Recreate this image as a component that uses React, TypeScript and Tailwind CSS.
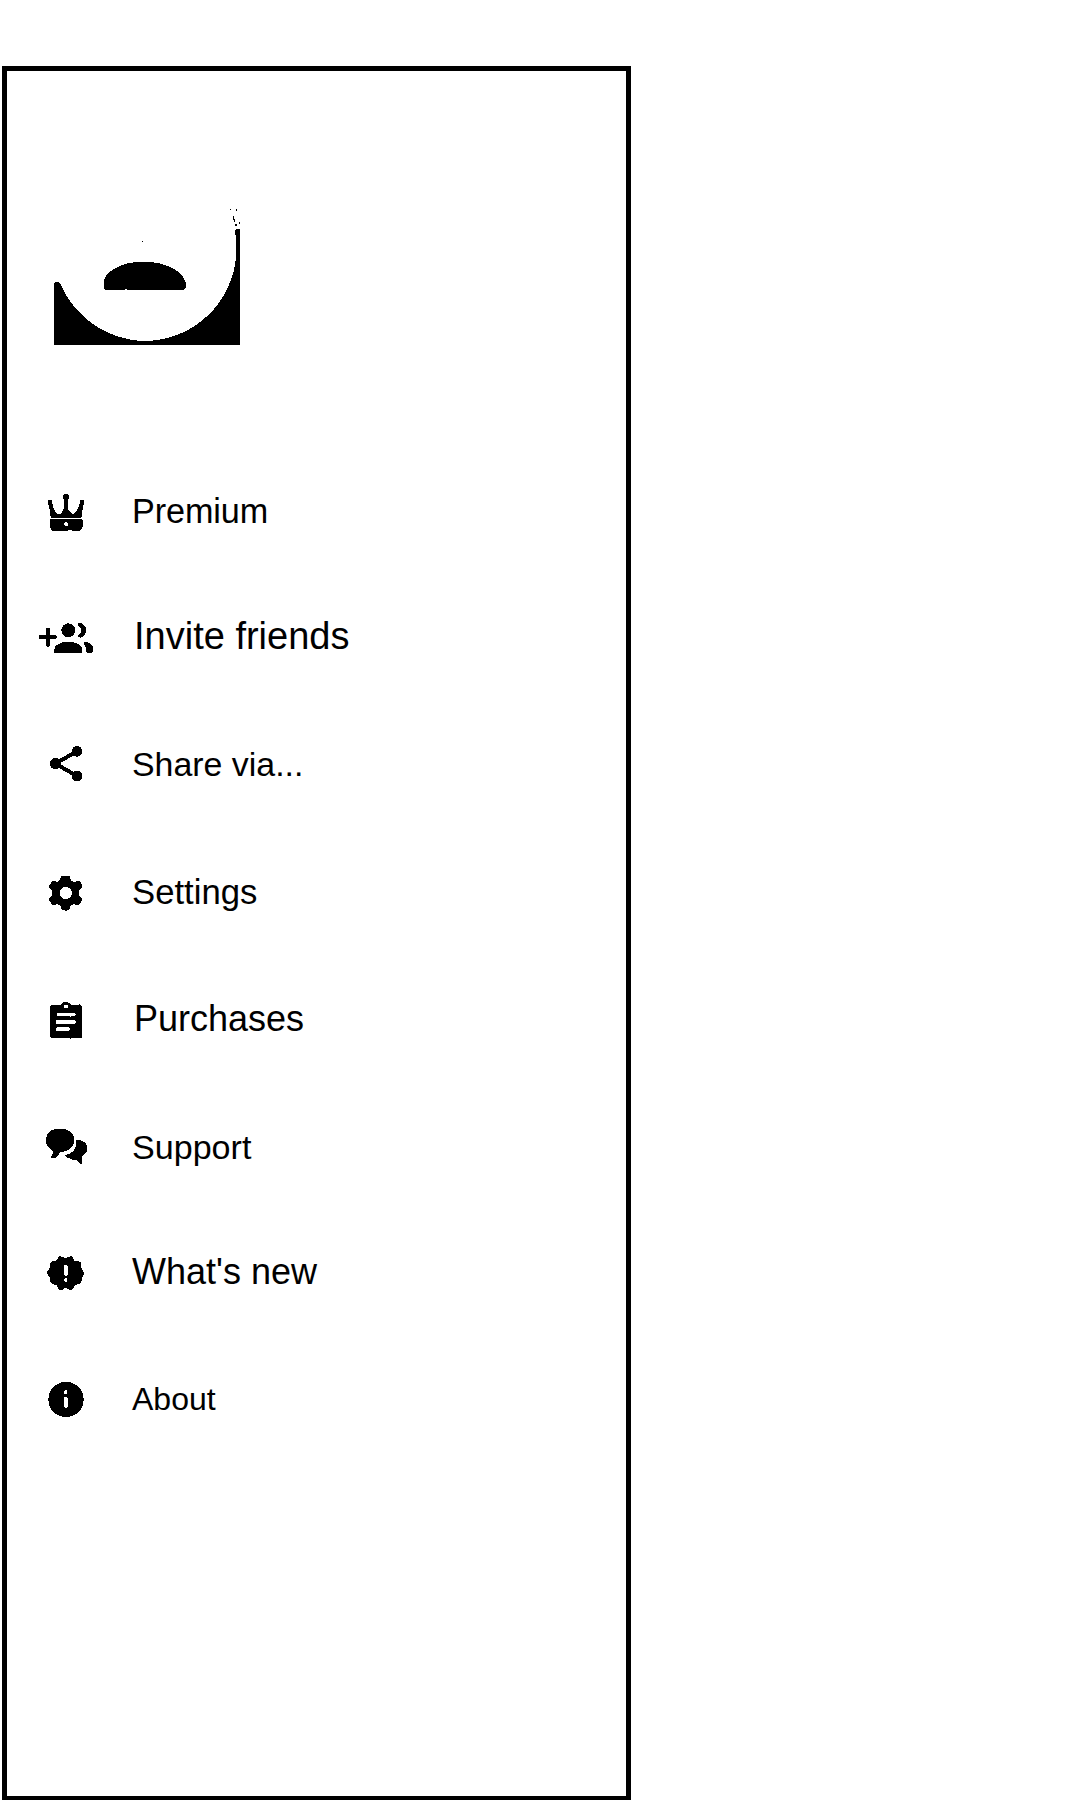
import type { ReactNode } from "react";

type Item = { label: string; row: string; text: string; box: string; icon: ReactNode };

const items: Item[] = [
  {
    label: "Premium",
    row: "",
    text: "ml-[36px] text-[34.2px] tracking-[-0.1px]",
    box: "18 21 180 144",
    icon: (
      <>
        <path d="M53 59H64L67 69 70 83 76 94 82 102H90L96 96 102 86V62L100 56V47L104 41H112L116 47V56L114 61V86L119 95 126 102H132L139 94 145 84 149 70 152 59H163V70L159 78 157 94 154 113H62L60 96 57 80 53 69Z" />
        <path fillRule="evenodd" d="M62 116h92l4 3v20l-4 9-4 4h-22l-4-2-4 2-4-2-4 2H68l-5-4-4-9v-20zM105 127l-4 4 3 4h2v3h7v-8l-4-3z" />
      </>
    ),
  },
  {
    label: "Invite friends",
    row: "mt-[77px]",
    text: "ml-[38px] text-[38px]",
    box: "18 21 180 144",
    icon: (
      <>
        <path d="M48 71L51 68H58L61 71V90H77L81 93V99L77 102H61V121L57 125H52L48 121V102H30L26 99V93L30 90H48Z" />
        <circle cx="115" cy="76" r="21" />
        <path d="M145 54H154L163 61 169 71V80L163 91 153 98 144 96V91L151 85 154 76 151 69 144 63Z" />
        <path d="M72 145v-10c0-14 19-25 43-25s42 11 42 25v10z" />
        <path d="M161 111h10l12 6 6 9v13l-3 6h-13l-6-6v-12l-6-11z" />
      </>
    ),
  },
  {
    label: "Share via...",
    row: "mt-[80px]",
    text: "ml-[36px] text-[33.9px]",
    box: "18 15 180 144",
    icon: (
      <>
        <path d="M141 49 76 86l65 37" fill="none" stroke="black" strokeWidth="12" />
        <circle cx="141" cy="49" r="16" />
        <circle cx="76" cy="86" r="17" />
        <circle cx="141" cy="123" r="16" />
      </>
    ),
  },
  {
    label: "Settings",
    row: "mt-[80px]",
    text: "ml-[36px] text-[34.7px]",
    box: "18 24 180 144",
    icon: (
      <path
        fillRule="evenodd"
        d="M93 47H119L122 60 132 66 141 63H149L157 77 155 84 147 92V107L156 115V121L147 135H139L130 132 122 137 118 149 111 150V153H104V150L95 149 91 138 83 132 74 135H66L58 121V115L67 107V92L58 83V77L66 63H73L83 66 90 60ZM107 81c-10 0-18 8-18 18s8 18 18 18 19-8 19-18-8-18-19-18z"
      />
    ),
  },
  {
    label: "Purchases",
    row: "mt-[79px]",
    text: "ml-[38px] text-[36px]",
    box: "18 15 180 144",
    icon: (
      <>
        <path d="M65 44h27l6-6 5-2h9l6 3 5 5h23l2-1 5 3 4 5v88l-2 5h-31v3h-4v-3H64l-4-4V50z" />
        <g fill="white">
          <circle cx="108" cy="50" r="6" />
          <path d="M82 69h20l3-3v3h29l3 3-2 7h-11l-2 3-2-3H83l-3-4zM80 90h55l3 5-3 7-3-1-3 3-3-2H80l-3-6zM80 112h36l4 5-3 7H80l-3-5z" />
        </g>
      </>
    ),
  },
  {
    label: "Support",
    row: "mt-[80px]",
    text: "ml-[36px] text-[34.1px]",
    box: "18 24 180 144",
    icon: (
      <>
        <path d="M78 42h23c17 2 31 13 31 28v12c-2 13-13 23-28 27l-14 3-6 9-8 8H63v-5l6-8-2-9-8-6-8-9-3-10V70c2-16 14-26 30-28z" />
        <path d="M139 75H151L163 81 171 91V108L165 117 155 127 156 145 151 147 139 136 124 133 111 127 105 120 118 116 130 109 136 98 138 87Z" />
      </>
    ),
  },
  {
    label: "What's new",
    row: "mt-[77px]",
    text: "ml-[36px] text-[36px]",
    box: "18 24 180 144",
    icon: (
      <>
        <path d="M90 48L97 51 103 53H111L117 50 124 48 129 52 132 62 146 63 153 68 153 82 162 97V102L156 113 154 127 149 132 137 134 130 145 124 150 117 149 110 145H104L97 149 90 150 85 146 80 135 67 132 61 127 60 113 51 101V96L59 84 60 69 65 65 79 62 86 51Z" />
        <path fill="white" d="M103 76l7-1 4 5v23l-4 4h-6l-3-4 1-12-1-4zM103 116l6-1 3 3-1 7h-7l-2-4z" />
      </>
    ),
  },
  {
    label: "About",
    row: "mt-[79px]",
    text: "ml-[36px] text-[32px]",
    box: "18 15 180 144",
    icon: (
      <>
        <circle cx="108" cy="88.500" r="53" />
        <path fill="white" d="M104 61l3-2h5v10l-3 3h-5l-2-4zM103 81h8l3 4v24l-3 4h-6l-3-4V88z" />
      </>
    ),
  },
];

function Avatar() {
  return (
    <svg
      className="ml-[23px] mt-[119px] block h-[170px] w-[230px] shrink-0"
      viewBox="0 0 690 510"
      shapeRendering="crispEdges"
    >
      <path d="M72 279L75 276H86L91 281A283 283 0 0 0 342 453A277 277 0 0 0 619 190V140L615 134V123L619 117H630V465H72Z" />
      <path d="M222 294v-24c5-15 14-24 30-33 24-14 52-22 88-22s66 8 92 22c20 11 31 26 36 43v13l-6 6H292l-4-2-8 3h-53z" />
      <path d="M600 57h3v3h-3zM618 57h3v6h-3zM609 78h3v12h-3zM612 87h3v9h-3zM615 102h6v6h-6zM627 96h3v6h-3zM336 153h3v3h-3z" />
    </svg>
  );
}

export default function App() {
  return (
    <div className="h-[1800px] w-[1080px] overflow-hidden bg-white pl-[2px] pt-[66px] text-black">
      <aside className="flex h-[1734px] w-[629px] flex-col border-[5px] border-b-4 border-black">
        <Avatar />
        <nav className="mt-[127px] flex flex-col pl-[29px] font-['Liberation_Sans',Arial,sans-serif]">
          {items.map((item) => (
            <a key={item.label} className={`flex h-12 items-center ${item.row}`}>
              <svg className="block h-12 w-[60px] shrink-0" viewBox={item.box} shapeRendering="crispEdges">
                {item.icon}
              </svg>
              <span className={`whitespace-nowrap leading-[48px] ${item.text}`}>{item.label}</span>
            </a>
          ))}
        </nav>
      </aside>
    </div>
  );
}
